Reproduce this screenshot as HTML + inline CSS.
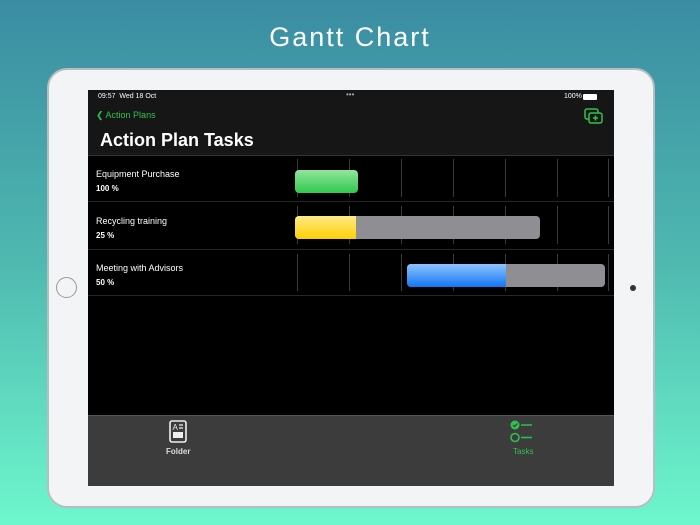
<!DOCTYPE html><html><head><style>
*{margin:0;padding:0;box-sizing:border-box}
body{width:700px;height:525px;overflow:hidden;background:linear-gradient(180deg,#3a8ca2 0%,#4fb9b0 50%,#6ef7cd 100%);font-family:"Liberation Sans",sans-serif;position:relative}
.title{position:absolute;top:22px;width:100%;text-align:center;color:#fff;font-size:27px;letter-spacing:2px}
.dev{position:absolute;left:47px;top:68px;width:608px;height:440px;background:#f3f4f6;border-radius:20px;border:2px solid #b9bcc0}
.scr{position:absolute;left:88px;top:90px;width:526px;height:396px;background:#000;overflow:hidden}
.hdr{position:absolute;left:0;top:0;width:526px;height:65px;background:#161616}
.t{position:absolute;color:#fff}
.row{position:absolute;left:0;width:526px;height:1px;background:#262626}
.vl{position:absolute;width:1px;background:#3a3a3a}
.bar{position:absolute;height:23px;border-radius:4px;overflow:hidden;background:#8e8e93}
.tab{position:absolute;left:0;top:325px;width:526px;height:71px;background:#3c3c3c;border-top:1px solid #555}
</style></head><body>
<div class="title">Gantt Chart</div>
<div class="dev"></div>
<div style="position:absolute;left:56px;top:277px;width:21px;height:21px;border-radius:50%;border:1.5px solid #999"></div>
<div style="position:absolute;left:630px;top:285px;width:6px;height:6px;border-radius:50%;background:#333"></div>
<div class="scr">
<div class="hdr"></div>
<div class="t" style="left:10px;top:3px;font-size:7px">09:57&nbsp;&nbsp;Wed 18 Oct</div>
<div class="t" style="left:258px;top:0px;font-size:8px;color:#aaa">•••</div>
<div class="t" style="left:476px;top:3px;font-size:7px">100%</div>
<div style="position:absolute;left:495px;top:4px;width:14px;height:6px;background:#fff;border-radius:1px"></div>
<div class="t" style="left:8px;top:20px;font-size:9px;color:#2fc24c">&#10094; Action Plans</div>
<svg style="position:absolute;left:496px;top:18px" width="20" height="17" viewBox="0 0 20 17"><rect x="1" y="1" width="13" height="10" rx="2" fill="none" stroke="#2fc24c" stroke-width="1.5"/><rect x="5" y="5" width="13" height="10" rx="2" fill="#161616" stroke="#2fc24c" stroke-width="1.5"/><path d="M11.5 7.5v5M9 10h5" stroke="#2fc24c" stroke-width="1.5"/></svg>
<div class="t" style="left:12px;top:40px;font-size:18px;font-weight:bold">Action Plan Tasks</div>
<div class="row" style="top:65px;background:#333"></div>
<div class="row" style="top:111px"></div><div class="row" style="top:159px"></div><div class="row" style="top:205px"></div>
<svg style="position:absolute;left:0;top:0" width="526" height="210">
<g stroke="#3a3a3a" stroke-width="1">
<path d="M209.5 69v38M261.5 69v38M313.5 69v38M365.5 69v38M417.5 69v38M469.5 69v38M520.5 69v38"/>
<path d="M209.5 116v38M261.5 116v38M313.5 116v38M365.5 116v38M417.5 116v38M469.5 116v38M520.5 116v38"/>
<path d="M209.5 164v37M261.5 164v37M313.5 164v37M365.5 164v37M417.5 164v37M469.5 164v37M520.5 164v37"/>
</g></svg>
<div class="t" style="left:8px;top:79px;font-size:9px">Equipment Purchase</div>
<div class="t" style="left:8px;top:94px;font-size:8px;font-weight:bold">100 %</div>
<div class="t" style="left:8px;top:126px;font-size:9px">Recycling training</div>
<div class="t" style="left:8px;top:141px;font-size:8px;font-weight:bold">25 %</div>
<div class="t" style="left:8px;top:173px;font-size:9px">Meeting with Advisors</div>
<div class="t" style="left:8px;top:188px;font-size:8px;font-weight:bold">50 %</div>
<div class="bar" style="left:207px;top:80px;width:63px"><div style="width:100%;height:100%;background:linear-gradient(#93e49d,#2fc94c)"></div></div>
<div class="bar" style="left:207px;top:126px;width:245px"><div style="width:61px;height:100%;background:linear-gradient(#ffe98a,#ffd100)"></div></div>
<div class="bar" style="left:319px;top:174px;width:198px"><div style="width:99px;height:100%;background:linear-gradient(#8ec3ff,#1277f5)"></div></div>
<div class="tab"></div>
<svg style="position:absolute;left:81px;top:330px" width="18" height="23" viewBox="0 0 18 23"><rect x="1" y="1" width="16" height="21" rx="2" fill="none" stroke="#eee" stroke-width="1.6"/><text x="3.5" y="10" font-size="8" fill="#eee" font-family="Liberation Sans">A</text><path d="M10 5h4M10 8h4" stroke="#eee" stroke-width="1.3"/><rect x="4" y="12" width="10" height="6" fill="#eee"/></svg>
<div class="t" style="left:78px;top:357px;font-size:8px;font-weight:bold;color:#ddd">Folder</div>
<svg style="position:absolute;left:421px;top:329px" width="28" height="26" viewBox="0 0 28 26"><circle cx="6" cy="6" r="4.5" fill="#2fc24c"/><path d="M4 6l1.5 1.5 3-3" stroke="#3c3c3c" stroke-width="1.2" fill="none"/><path d="M12 6h11M12 18.5h11" stroke="#2fc24c" stroke-width="1.6"/><circle cx="6" cy="18.5" r="4" fill="none" stroke="#2fc24c" stroke-width="1.6"/></svg>
<div class="t" style="left:425px;top:357px;font-size:8px;color:#2fc24c">Tasks</div>
</div>
</body></html>
